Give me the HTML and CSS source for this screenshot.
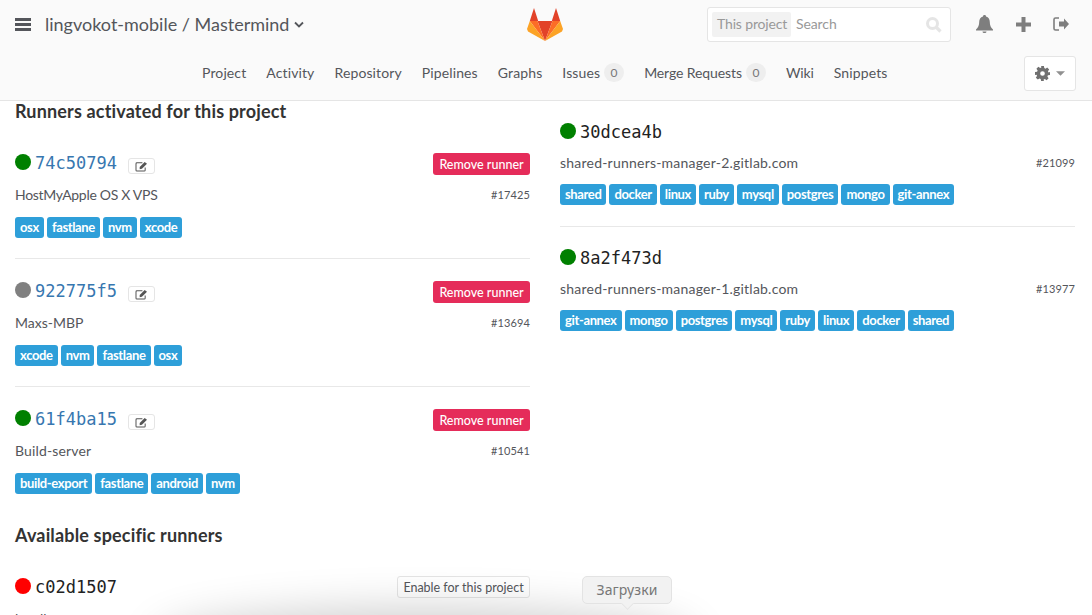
FILE: index.html
```html
<!DOCTYPE html>
<html lang="en">
<head>
<meta charset="utf-8">
<title>Runners</title>
<link rel="stylesheet" href="styles.css">
</head>
<body>
<header class="navbar">
  <div class="top-row">
    <svg class="burger" viewBox="0 0 16 13"><path d="M0 0h16v3H0zM0 5h16v3H0zM0 10h16v3H0z"/></svg>
    <span class="project-title">lingvokot-mobile / Mastermind</span>
    <svg class="chev" viewBox="0 0 10 7"><path d="M1 1.500l4 4 4-4" fill="none" stroke="#54565b" stroke-width="1.800"/></svg>
    <svg class="logo" viewBox="0 0 36 33">
      <path fill="#e24329" d="M7 0l4.200 13H2.800zM29 0l4.200 13H24.800zM10.500 13h15L18 33z"/>
      <path fill="#fc6d26" d="M2.800 13h7.700L18 33zM33.200 13h-7.700L18 33z"/>
      <path fill="#fca326" d="M2.800 13L0 21l1 2.500L18 33zM33.200 13L36 21l-1 2.500L18 33z"/>
    </svg>
    <div class="search">
      <span class="scope">This project</span>
      <span class="search-text">Search</span>
      <svg class="mag" viewBox="0 0 16 16"><circle cx="6.500" cy="6.500" r="5" fill="none" stroke="#e5e5e5" stroke-width="3"/><path d="M10.500 10.500l4 4" stroke="#e5e5e5" stroke-width="3.200"/></svg>
    </div>
    <svg class="ico bell" viewBox="0 0 17 18"><path fill="#7e7e7e" d="M8.500 0c1 0 1.500.6 1.500 1.400 2.600.6 3.800 2.800 3.800 5.600 0 3.500 1 5.500 3.200 7.500v1H0v-1C2.200 12.500 3.200 10.500 3.200 7c0-2.800 1.200-5 3.800-5.600C7 .6 7.500 0 8.500 0zM6.500 16.500h4c0 1-.9 1.500-2 1.500s-2-.5-2-1.500z"/></svg>
    <svg class="ico plus" viewBox="0 0 15 15"><path fill="#7e7e7e" d="M5.500 0h4v5.500H15v4H9.500V15h-4V9.500H0v-4h5.500z"/></svg>
    <svg class="ico signout" viewBox="0 0 16 14"><path fill="#7e7e7e" d="M11 1.500L16 7l-5 5.500V9.500H6v-5h5z"/><path fill="none" stroke="#7e7e7e" stroke-width="1.600" d="M6 1H2.500C1.500 1 1 1.600 1 2.500v9c0 .9.500 1.500 1.500 1.500H6"/></svg>
  </div>
  <div class="nav-row">
    <nav class="nav-links">
      <a class="nav-link">Project</a>
      <a class="nav-link">Activity</a>
      <a class="nav-link">Repository</a>
      <a class="nav-link">Pipelines</a>
      <a class="nav-link">Graphs</a>
      <a class="nav-link">Issues <span class="count">0</span></a>
      <a class="nav-link narrow">Merge Requests <span class="count">0</span></a>
      <a class="nav-link narrow">Wiki</a>
      <a class="nav-link">Snippets</a>
    </nav>
    <button class="settings">
      <svg class="gear" viewBox="0 0 16 16"><path fill="#707070" fill-rule="evenodd" d="M6.500 0h3l.4 2.200 1.300.6L13 1.500l2.100 2.100-1.300 1.900.6 1.300L16 6.500v3l-2.200.4-.6 1.300 1.300 1.900-2.100 2.100-1.900-1.300-1.300.6L9.500 16h-3l-.4-2.200-1.300-.6L3 14.500.9 12.400l1.300-1.900-.6-1.300L0 9.500v-3l2.200-.4.6-1.300L1.500 3 3.600.9l1.900 1.300 1.300-.6zM8 5.500a2.500 2.500 0 100 5 2.500 2.500 0 000-5z"/></svg>
      <svg class="caret" viewBox="0 0 10 5"><path fill="#909090" d="M0 0h10L5 5z"/></svg>
    </button>
  </div>
</header>

<main class="content">
  <section class="col">
    <h4 class="col-title">Runners activated for this project</h4>
    <ul class="runners">
      <li class="runner">
        <div class="r-top">
          <span class="dot green"></span><a class="token link">74c50794</a>
          <span class="edit"><svg viewBox="0 0 14 12"><path fill="none" stroke="#555" stroke-width="1.100" d="M11 7v3c0 .7-.4 1-1 1H2c-.7 0-1-.4-1-1V3c0-.7.400-1 1-1h6"/><path fill="#555" d="M5 6.500L10.500 1 13 3 7.500 8.500 5 9z"/></svg></span>
          <button class="remove">Remove runner</button>
        </div>
        <div class="r-mid"><span class="tight">HostMyApple OS X VPS</span><span class="id">#17425</span></div>
        <div class="tags"><span class="tag">osx</span><span class="tag">fastlane</span><span class="tag">nvm</span><span class="tag">xcode</span></div>
      </li>
      <li class="runner">
        <div class="r-top">
          <span class="dot gray"></span><a class="token link">922775f5</a>
          <span class="edit"><svg viewBox="0 0 14 12"><path fill="none" stroke="#555" stroke-width="1.100" d="M11 7v3c0 .7-.4 1-1 1H2c-.7 0-1-.4-1-1V3c0-.7.400-1 1-1h6"/><path fill="#555" d="M5 6.500L10.500 1 13 3 7.500 8.500 5 9z"/></svg></span>
          <button class="remove">Remove runner</button>
        </div>
        <div class="r-mid"><span>Maxs-MBP</span><span class="id">#13694</span></div>
        <div class="tags"><span class="tag">xcode</span><span class="tag">nvm</span><span class="tag">fastlane</span><span class="tag">osx</span></div>
      </li>
      <li class="runner last">
        <div class="r-top">
          <span class="dot green"></span><a class="token link">61f4ba15</a>
          <span class="edit"><svg viewBox="0 0 14 12"><path fill="none" stroke="#555" stroke-width="1.100" d="M11 7v3c0 .7-.4 1-1 1H2c-.7 0-1-.4-1-1V3c0-.7.400-1 1-1h6"/><path fill="#555" d="M5 6.500L10.500 1 13 3 7.500 8.500 5 9z"/></svg></span>
          <button class="remove">Remove runner</button>
        </div>
        <div class="r-mid"><span class="loose">Build-server</span><span class="id">#10541</span></div>
        <div class="tags"><span class="tag">build-export</span><span class="tag">fastlane</span><span class="tag">android</span><span class="tag">nvm</span></div>
      </li>
    </ul>
    <h4 class="col-title second">Available specific runners</h4>
    <div class="runner last avail">
      <div class="r-top">
        <span class="dot red"></span><span class="token">c02d1507</span>
        <button class="enable">Enable for this project</button>
      </div>
      <div class="r-mid"><span>localhost</span><span class="id">#9563</span></div>
    </div>
  </section>
  <section class="col right">
    <ul class="runners">
      <li class="runner shared">
        <div class="r-top"><span class="dot green"></span><span class="token">30dcea4b</span></div>
        <div class="r-mid"><span class="wide">shared-runners-manager-2.gitlab.com</span><span class="id">#21099</span></div>
        <div class="tags"><span class="tag">shared</span><span class="tag">docker</span><span class="tag">linux</span><span class="tag">ruby</span><span class="tag">mysql</span><span class="tag">postgres</span><span class="tag">mongo</span><span class="tag">git-annex</span></div>
      </li>
      <li class="runner shared last">
        <div class="r-top"><span class="dot green"></span><span class="token">8a2f473d</span></div>
        <div class="r-mid"><span class="wide">shared-runners-manager-1.gitlab.com</span><span class="id">#13977</span></div>
        <div class="tags"><span class="tag">git-annex</span><span class="tag">mongo</span><span class="tag">postgres</span><span class="tag">mysql</span><span class="tag">ruby</span><span class="tag">linux</span><span class="tag">docker</span><span class="tag">shared</span></div>
      </li>
    </ul>
  </section>
</main>

<div class="dock-shadow"></div>
<div class="tooltip">Загрузки</div>
</body>
</html>
```

FILE: styles.css
```css
* { box-sizing: border-box; }
html, body { margin: 0; padding: 0; height: 615px; overflow: hidden; background: #fff; }
body { font-family: "Lato", "Noto Sans", sans-serif; font-size: 14px; color: #54565b; position: relative; }

.navbar { height: 101px; background: #fafafa; border-bottom: 1px solid #e5e5e5; }
.top-row { height: 48px; display: flex; align-items: center; padding: 0 23px 0 15px; }
.burger { width: 16px; height: 13px; fill: #54565b; flex: none; }
.project-title { font-size: 18px; margin-left: 14px; color: #54565b; white-space: nowrap; }
.chev { width: 10px; height: 7px; margin-left: 5px; flex: none; }
.logo { width: 36px; height: 33px; flex: none; margin-left: 223px; }
.search { width: 244px; height: 35px; margin-left: auto; margin-top: 1px; background: #fff; border: 1px solid #e5e5e5; border-radius: 3px; display: flex; align-items: center; padding: 0 8px 0 4px; }
.scope { background: #f2f2f2; color: #999; height: 25px; line-height: 24px; padding: 0 5px; border-radius: 2px; font-size: 14px; white-space: nowrap; width: 79px; letter-spacing: -.15px; }
.search-text { color: #999; margin-left: 5px; margin-bottom: 2px; letter-spacing: -.1px; }
.mag { width: 16px; height: 16px; margin-left: auto; }
.ico { flex: none; }
.bell { width: 17px; height: 18px; margin-left: 25px; }
.plus { width: 15px; height: 15px; margin-left: 23px; }
.signout { width: 16px; height: 14px; margin-left: 22px; }

.nav-row { height: 52px; display: flex; align-items: center; padding: 0 16px 3px 202px; }
.nav-links { display: flex; align-items: center; gap: 20px; }
.nav-link { color: #54565b; font-size: 14px; letter-spacing: .12px; white-space: nowrap; display: flex; align-items: center; gap: 4px; }
.nav-link.narrow { letter-spacing: -.1px; }
.count { background: #eee; border-radius: 10px; width: 20px; height: 19px; line-height: 19px; text-align: center; font-size: 12px; color: #777; }
.settings { margin-left: auto; margin-top: 2px; width: 52px; height: 35px; background: #fff; border: 1px solid #e5e5e5; border-radius: 3px; display: flex; align-items: center; justify-content: center; gap: 6px; padding: 0; }
.gear { width: 15px; height: 15px; }
.caret { width: 9px; height: 5px; }

.content { display: grid; grid-template-columns: 515px 515px; column-gap: 30px; padding: 0 17px 0 15px; }
.col-title { margin: -1px 0 0; font-size: 18px; font-weight: 700; color: #333; line-height: 22px; letter-spacing: .16px; }
.second { margin-top: 9px; }
.runners { list-style: none; margin: 0; padding: 0; }
.runner { height: 128px; padding-top: 20px; border-bottom: 1px solid #e8e8e8; }
.runner.last { border-bottom: 0; }
.col-title + .runners .runner:first-child { height: 137px; padding-top: 29px; }
.r-top { display: flex; align-items: center; height: 22px; }
.dot { width: 16px; height: 16px; border-radius: 50%; flex: none; }
.green { background: #008000; }
.gray { background: #808080; }
.red { background: #f00; }
.token { font-family: "DejaVu Sans Mono", monospace; font-size: 17px; color: #222; margin-left: 4px; padding-top: 1px; }
.token.link { color: #3777b0; }
.edit { width: 27px; height: 16px; margin-left: 11px; margin-top: 8px; border: 1px solid #e5e5e5; border-radius: 3px; background: #fff; display: flex; align-items: center; justify-content: center; }
.edit svg { width: 13px; height: 11px; }
.remove { margin-left: auto; margin-top: 4px; width: 97px; height: 22px; background: #e52c5a; border: 0; border-radius: 3px; color: #fff; font: 500 12.5px "Lato", sans-serif; padding: 0; white-space: nowrap; }
.enable { margin-left: auto; margin-top: 2px; width: 133px; height: 22px; background: #fff; border: 1px solid #e5e5e5; border-radius: 3px; color: #54565b; font: 12.5px "Lato", sans-serif; padding: 0; white-space: nowrap; }
.r-mid { display: flex; justify-content: space-between; align-items: center; height: 22px; margin-top: 10px; font-size: 14px; color: #54565b; }
.tight { letter-spacing: -.3px; }
.wide { letter-spacing: .22px; }
.loose { letter-spacing: .15px; }
.id { font-size: 11px; letter-spacing: .1px; }
.tags { display: flex; gap: 3px; margin-top: 12px; }
.tag { height: 21px; line-height: 21px; padding: 0 5px; background: #2e9fd9; color: #fff; border-radius: 3px; font-size: 13px; font-weight: 700; letter-spacing: -.36px; white-space: nowrap; }
.avail { height: auto; padding-top: 29px; }

.right { padding-top: 19px; }
.runner.shared { height: 126px; padding-top: 19px; }
.runner.shared:first-child { height: 107px; padding-top: 0; }
.runner.shared .r-mid { margin-top: 9px; }
.runner.shared .tags { margin-top: 11px; }

.dock-shadow { position: absolute; left: 170px; top: 625px; width: 510px; height: 40px; border-radius: 50%; box-shadow: 0 0 45px 15px rgba(0,0,0,.2); pointer-events: none; }
.tooltip { position: absolute; left: 582px; top: 576px; width: 90px; height: 28px; background: #f2f2f2; border: 1px solid #e3e3e3; border-radius: 5px; color: #777; font-family: "Noto Sans", sans-serif; font-size: 14px; line-height: 26px; text-align: center; letter-spacing: .1px; }
.tooltip::after { content: ""; position: absolute; left: 39px; top: 21px; width: 10px; height: 10px; background: #f2f2f2; transform: rotate(45deg) scale(.8); border-right: 1px solid #e3e3e3; border-bottom: 1px solid #e3e3e3; }
```
